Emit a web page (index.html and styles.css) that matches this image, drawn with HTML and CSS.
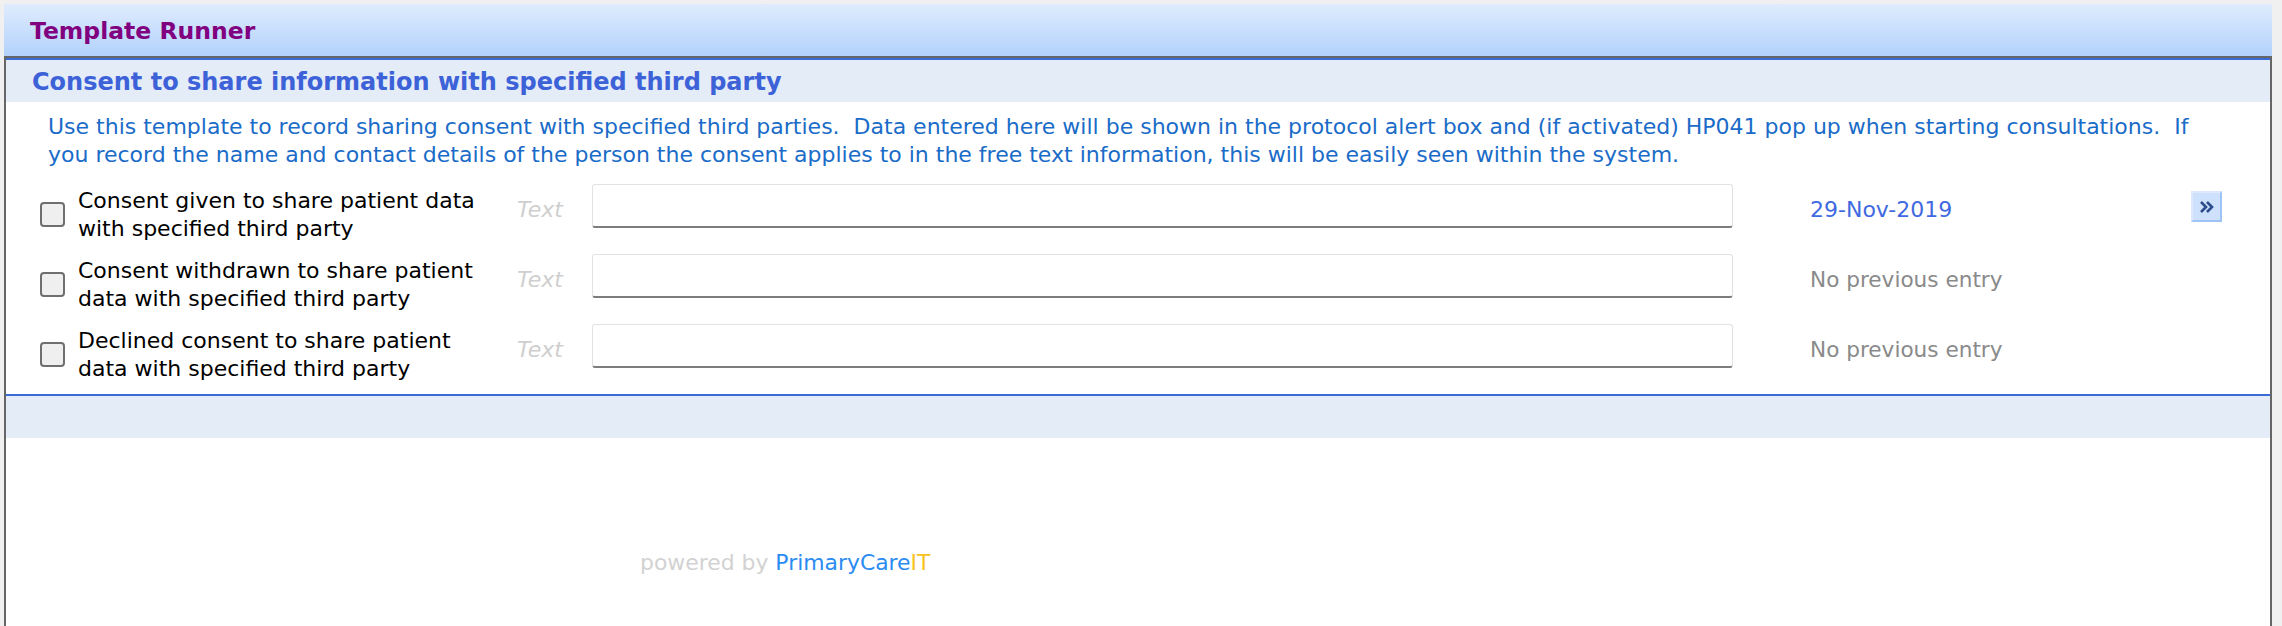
FILE: index.html
```html
<!DOCTYPE html>
<html>
<head>
<meta charset="utf-8">
<link rel="stylesheet" href="styles.css">
</head>
<body>
<div class="app">
  <div class="titlebar">Template Runner</div>
  <div class="frame">
    <div class="section-head">Consent to share information with specified third party</div>
    <p class="desc">Use this template to record sharing consent with specified third parties.&nbsp; Data entered here will be shown in the protocol alert box and (if activated) HP041 pop up when starting consultations.&nbsp; If you record the name and contact details of the person the consent applies to in the free text information, this will be easily seen within the system.</p>
    <div class="rows">
      <div class="row">
        <span class="cb"></span>
        <span class="label">Consent given to share patient data with specified third party</span>
        <span class="ph">Text</span>
        <span class="field"></span>
        <span class="date">29-Nov-2019</span>
        <span class="more"><svg width="14" height="12" viewBox="0 0 14 12"><path d="M1 1 L6 6 L1 11 M7 1 L12 6 L7 11" fill="none" stroke="#2c4c8c" stroke-width="2.6"/></svg></span>
      </div>
      <div class="row">
        <span class="cb"></span>
        <span class="label">Consent withdrawn to share patient data with specified third party</span>
        <span class="ph">Text</span>
        <span class="field"></span>
        <span class="prev">No previous entry</span>
      </div>
      <div class="row">
        <span class="cb"></span>
        <span class="label">Declined consent to share patient data with specified third party</span>
        <span class="ph">Text</span>
        <span class="field"></span>
        <span class="prev">No previous entry</span>
      </div>
    </div>
    <div class="section-foot"></div>
    <div class="powered">powered by <span class="brand">PrimaryCare</span><span class="it">IT</span></div>
  </div>
</div>
</body>
</html>
```

FILE: styles.css
```css
html, body {
  margin: 0;
  padding: 0;
  background: #f0f0f0;
  height: 100%;
}
body {
  font-family: "DejaVu Sans", "Liberation Sans", sans-serif;
  font-size: 22px;
  overflow: hidden;
}
.app {
  display: flex;
  flex-direction: column;
  box-sizing: border-box;
  height: 626px;
  padding: 4px 10px 0 4px;
}
.titlebar {
  height: 52px;
  box-sizing: border-box;
  padding: 12px 0 0 26px;
  background: linear-gradient(#e0ecfe, #b2d2fb);
  color: #800080;
  font-weight: bold;
  font-size: 23.5px;
  line-height: 30px;
}
.frame {
  flex: 1;
  border: 2px solid #666;
  border-bottom: none;
  background: #fff;
  display: flex;
  flex-direction: column;
}
.section-head {
  border-top: 2px solid #3a6ad6;
  background: #e4ecf8;
  height: 35px;
  padding: 7px 0 0 26px;
  color: #3d62d8;
  font-weight: bold;
  font-size: 24px;
  line-height: 30px;
}
.desc {
  margin: 0;
  padding: 11px 60px 0 42px;
  height: 81px;
  box-sizing: border-box;
  color: #1a6cc8;
  line-height: 28px;
}
.rows {
  display: flex;
  flex-direction: column;
}
.row {
  display: flex;
  align-items: flex-start;
  height: 70px;
  padding-left: 34px;
}
.cb {
  width: 25px;
  height: 25px;
  box-sizing: border-box;
  border: 2px solid #6f6f6f;
  border-radius: 4px;
  background: #efefef;
  margin-top: 19px;
  flex: none;
}
.label {
  width: 416px;
  margin-left: 13px;
  margin-right: 23px;
  margin-top: 4px;
  line-height: 28px;
  color: #000;
  flex: none;
}
.ph {
  width: 75px;
  margin-top: 13px;
  line-height: 28px;
  font-style: italic;
  color: #cfcfcf;
  flex: none;
}
.field {
  width: 1141px;
  height: 44px;
  box-sizing: border-box;
  margin-top: 1px;
  border: 1px solid #e2e2e2;
  border-bottom: 2px solid #7d7d7d;
  border-radius: 3px;
  background: #fff;
  flex: none;
}
.date, .prev {
  width: 381px;
  margin-left: 77px;
  margin-top: 13px;
  line-height: 28px;
  flex: none;
}
.date {
  color: #4169e1;
  font-size: 22px;
}
.prev {
  color: #8a8a8a;
  font-size: 21.6px;
}
.more {
  width: 31px;
  height: 31px;
  box-sizing: border-box;
  margin-top: 8px;
  background: #cde0fc;
  border: 2px solid #9ec4f7;
  border-top-color: #dce8fd;
  border-left-color: #dce8fd;
  display: flex;
  align-items: center;
  justify-content: center;
  flex: none;
}
.section-foot {
  border-top: 2px solid #3a6ad6;
  background: #e4ecf8;
  height: 42px;
  margin-top: 1px;
}
.powered {
  padding: 111px 0 0 634px;
  font-size: 21.9px;
  line-height: 27px;
  color: #d2d2d2;
}
.brand { color: #2a8cf2; }
.it { color: #f7c21b; }
```
